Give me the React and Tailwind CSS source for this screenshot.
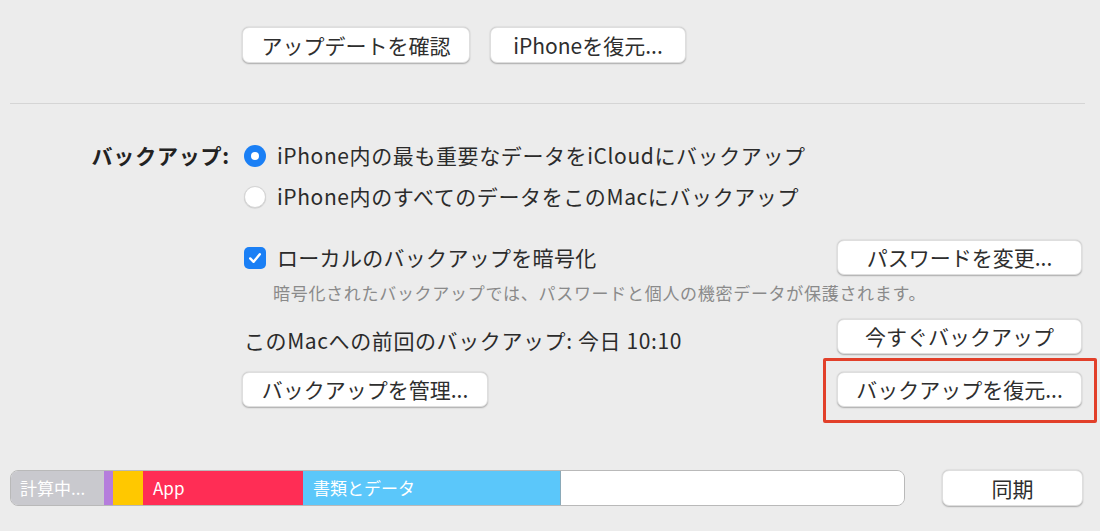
import React from 'react';

const font = { fontFamily: '"Noto Sans CJK JP", "Noto Sans", sans-serif' };

function MacButton({ children, className = '' }) {
    return (
        <button
            className={`h-[35px] rounded-[7px] bg-white text-[21px] text-[#2e2e2e] leading-none flex items-center justify-center shadow-[0_0.5px_1.5px_rgba(0,0,0,0.28)] border border-[#dedede] ${className}`}
        >
            {children}
        </button>
    );
}

function Radio({ checked }) {
    return checked ? (
        <span className="w-[22px] h-[22px] rounded-full bg-[#1a7ff5] flex items-center justify-center shrink-0">
            <span className="w-[8px] h-[8px] rounded-full bg-white" />
        </span>
    ) : (
        <span className="w-[22px] h-[22px] rounded-full bg-white border border-[#d4d4d4] shadow-[0_0.5px_1px_rgba(0,0,0,0.15)] shrink-0" />
    );
}

function Checkbox() {
    return (
        <span className="w-[22px] h-[22px] rounded-[5px] bg-[#1a7ff5] flex items-center justify-center shrink-0">
            <svg width="16" height="16" viewBox="0 0 16 16" fill="none">
                <path d="M3.2 8.4 L6.6 11.8 L12.8 4.2" stroke="white" strokeWidth="2.4" strokeLinecap="round" strokeLinejoin="round" />
            </svg>
        </span>
    );
}

export default function App() {
    return (
        <div className="w-[1100px] h-[531px] bg-[#ececec] overflow-hidden text-[#2b2b2b]" style={font}>
            {/* top buttons */}
            <div className="flex gap-[20px] pl-[242px] pt-[27px]">
                <MacButton className="w-[228px] h-[36px]">アップデートを確認</MacButton>
                <MacButton className="w-[196px] h-[36px]">iPhoneを復元...</MacButton>
            </div>

            <div className="mt-[40px] ml-[10px] w-[1075px] h-px bg-[#d5d5d5]" />

            {/* backup section */}
            <div className="flex mt-[31px]">
                <div className="w-[232px] h-[41px] flex items-center justify-end text-[21px] tracking-[0.8px] font-bold text-[#222] pr-[2px]">
                    バックアップ:
                </div>
                <div className="flex flex-col pl-[12px] w-[862px] pr-[12px]">
                    <div className="h-[41px] flex items-center gap-[11px] text-[21px] tracking-[0.6px]">
                        <Radio checked />
                        <span>iPhone内の最も重要なデータをiCloudにバックアップ</span>
                    </div>
                    <div className="h-[41px] flex items-center gap-[11px] text-[21px] tracking-[0.6px]">
                        <Radio />
                        <span>iPhone内のすべてのデータをこのMacにバックアップ</span>
                    </div>

                    <div className="h-[35px] mt-[23px] flex items-center justify-between">
                        <div className="flex items-center gap-[11px] text-[21px] tracking-[0.3px]">
                            <Checkbox />
                            <span>ローカルのバックアップを暗号化</span>
                        </div>
                        <MacButton className="w-[245px]">パスワードを変更...</MacButton>
                    </div>
                    <div className="h-[36px] flex items-center pl-[29px] text-[17px] tracking-[0.7px] text-[#8a8a8a]">
                        暗号化されたバックアップでは、パスワードと個人の機密データが保護されます。
                    </div>

                    <div className="h-[35px] mt-[8px] flex items-center justify-between">
                        <span className="text-[21px] tracking-[0.6px] pt-[8px]">このMacへの前回のバックアップ: 今日 10:10</span>
                        <MacButton className="w-[245px]">今すぐバックアップ</MacButton>
                    </div>
                    <div className="h-[35px] mt-[18px] flex items-center justify-between -ml-[2px]">
                        <MacButton className="w-[246px]">バックアップを管理...</MacButton>
                        <div className="relative">
                            <MacButton className="w-[245px]">バックアップを復元...</MacButton>
                            <div className="absolute -left-[14px] -right-[15px] -top-[14px] -bottom-[16px] border-[3px] border-[#e2402a] rounded-[2px]" />
                        </div>
                    </div>
                </div>
            </div>

            {/* storage bar */}
            <div className="flex items-center mt-[63px] pl-[10px]">
                <div className="w-[895px] h-[36px] flex rounded-[8px] overflow-hidden border border-[#b9b9b9] text-[17px] text-white">
                    <div className="w-[93px] bg-[#c9c9ce] flex items-center pl-[9px]">計算中...</div>
                    <div className="w-[9px] bg-[#b57ddc]" />
                    <div className="w-[30px] bg-[#ffc800]" />
                    <div className="w-[160px] bg-[#ff2d55] flex items-center pl-[10px]">App</div>
                    <div className="w-[258px] bg-[#5bc7fa] flex items-center pl-[10px] border-r border-[#8aa9b8]">書類とデータ</div>
                    <div className="flex-1 bg-white" />
                </div>
                <MacButton className="w-[141px] h-[36px] ml-[37px]">同期</MacButton>
            </div>
        </div>
    );
}
